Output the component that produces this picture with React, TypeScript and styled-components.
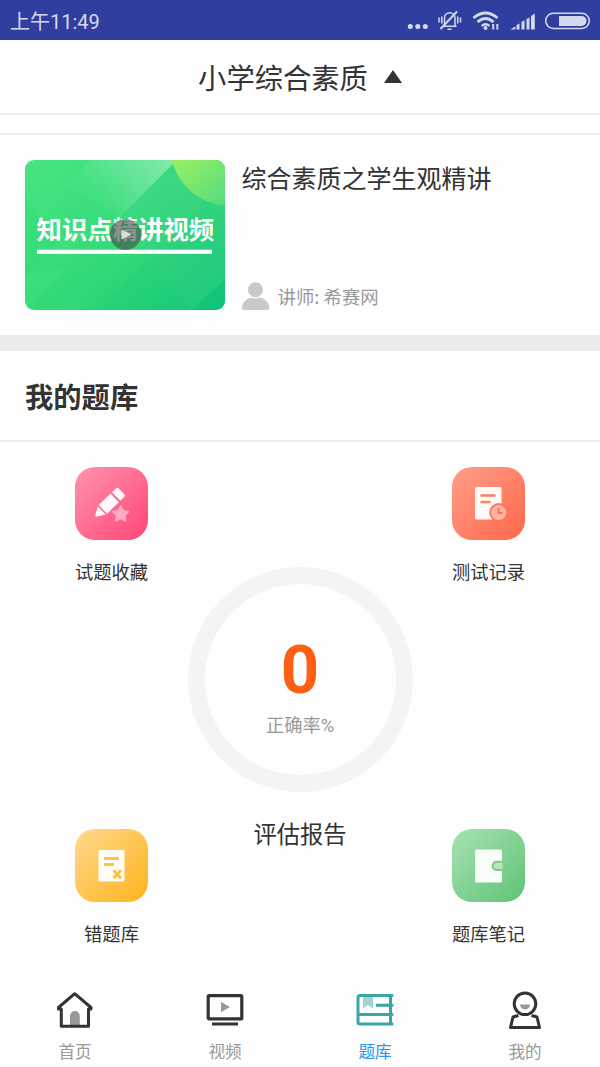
import React from 'react';
import styled, { createGlobalStyle } from 'styled-components';

const Global = createGlobalStyle`
  * { box-sizing: border-box; }
  body { margin: 0; background: #fefefe; font-family: "Noto Sans CJK SC", sans-serif; color: #333; }
  svg { display: block; flex: none; }
`;

const Screen = styled.div`
  width: 600px;
  height: 1067px;
  display: flex;
  flex-direction: column;
  overflow: hidden;
`;

const Latin = styled.span`
  font-family: Roboto, sans-serif;
  line-height: 1;
`;

const StatusBar = styled.div`
  height: 40px;
  flex: none;
  display: flex;
  justify-content: space-between;
  align-items: center;
  padding: 2px 0 0 10px;
  background: #303f9f;
  color: #d6d9ec;
  font-size: 20px;
  line-height: 38px;
`;

const Header = styled.header`
  height: 75px;
  flex: none;
  display: flex;
  align-items: center;
  justify-content: center;
  gap: 16px;
  border-bottom: 2px solid #ececec;
  font-size: 28.3px;
  line-height: 40px;
`;

const Spacer = styled.div`
  height: 20px;
  flex: none;
  border-bottom: 2px solid #ececec;
`;

const VideoCard = styled.section`
  height: 200px;
  flex: none;
  display: flex;
  gap: 16.500px;
  padding: 25px;
`;

const Cover = styled.div`
  position: relative;
  width: 200px;
  height: 150px;
  border-radius: 9px;
  overflow: hidden;
`;

const CoverArt = styled.svg`
  position: absolute;
  inset: 0;
`;

const CoverTitle = styled.div`
  position: absolute;
  left: 11.500px;
  top: 49px;
  width: 184px;
  font-size: 25.4px;
  line-height: 38px;
  font-weight: 700;
  color: #fff;
  white-space: nowrap;
`;

const PlayBadge = styled.svg`
  position: absolute;
  left: 84.500px;
  top: 59px;
`;

const VideoInfo = styled.div`
  display: flex;
  flex-direction: column;
  justify-content: space-between;
`;

const VideoTitle = styled.div`
  font-size: 25px;
  line-height: 34px;
`;

const Lecturer = styled.div`
  display: flex;
  align-items: flex-end;
  gap: 8px;
  font-size: 18.4px;
  line-height: 28px;
  color: #999;
`;

const SectionTitle = styled.h2`
  height: 107px;
  flex: none;
  margin: 0;
  padding: 0 25px;
  border-top: 16px solid #ececec;
  border-bottom: 2px solid #ececec;
  font-size: 28.3px;
  line-height: 89px;
  font-weight: 700;
`;

const Board = styled.section`
  height: 533px;
  flex: none;
  display: grid;
  grid-template-columns: 149px 228px 149px;
  justify-content: center;
  padding: 25px 0 27px;
`;

const ShortcutColumn = styled.div`
  display: flex;
  flex-direction: column;
  justify-content: space-between;
`;

const Shortcut = styled.div`
  display: flex;
  flex-direction: column;
  align-items: center;
  gap: 17px;
  height: 119px;
  font-size: 18.3px;
  line-height: 28px;
`;

const Report = styled.div`
  display: flex;
  flex-direction: column;
  align-items: center;
  padding-top: 100px;
`;

const Gauge = styled.div`
  width: 225px;
  height: 225px;
  display: flex;
  flex-direction: column;
  align-items: center;
  border: 17px solid #f4f4f4;
  border-radius: 50%;
`;

const Score = styled.div`
  margin-top: 46px;
  font-family: Roboto, sans-serif;
  font-size: 67px;
  line-height: 80px;
  font-weight: 700;
  color: #ff5f14;
`;

const ScoreUnit = styled.div`
  margin-top: 1px;
  font-size: 18.3px;
  line-height: 26px;
  color: #999;
`;

const ReportLabel = styled.div`
  margin-top: 23px;
  font-size: 23.3px;
  line-height: 36px;
`;

const TabBar = styled.nav`
  flex: 1;
  display: grid;
  grid-template-columns: repeat(4, 150px);
`;

const Tab = styled.div<{ $active?: boolean }>`
  display: flex;
  flex-direction: column;
  align-items: center;
  padding-top: 15px;
  gap: 9px;
  font-size: 16.6px;
  line-height: 24px;
  color: ${(p) => (p.$active ? '#2795f5' : '#999')};
`;

const StatusIcons = () => (
  <svg width="200" height="38" viewBox="0 1 200 38" fill="#d6d9ec">
    <circle cx="10.300" cy="25.500" r="2.500" />
    <circle cx="17.800" cy="25.500" r="2.500" />
    <circle cx="25.300" cy="25.500" r="2.500" />
    <g fill="none" stroke="#d6d9ec" strokeWidth="1.500">
      <path d="M43 25.300h13.500M44.500 25v-8c0-7 10.500-7 10.500 0v8M47.500 28.200h4M41.800 15.500v7M39 16.500v5M57.700 15.500v7M60.500 16.500v5" />
      <path d="M40.500 28L57 10.500" strokeWidth="2" />
      <g strokeWidth="2.800">
        <path d="M73.500 17q12-10 24 0" />
        <path d="M77.500 21q8-7 16 0" />
        <path d="M81.500 25q4-3.500 8 0" strokeWidth="2.300" />
      </g>
      <path d="M93.200 23v5.500M97.300 23v5.500" strokeWidth="2" />
      <rect x="145.700" y="12.200" width="43.600" height="15.200" rx="7.600" />
    </g>
    <circle cx="85.500" cy="27" r="2" />
    <path d="M110.300 28.500l5-3v3zM116.500 24l3-1.500v6h-3zM121.500 21l3-1.700v9.200h-3zM126.500 18l3-1.500v12h-3zM131 15l3.800-2.500v16H131z" />
    <path d="M159 15h22.500a5 5 0 0 1 0 10H159z" />
  </svg>
);

const CoverScene = () => (
  <CoverArt width="200" height="150" viewBox="0 0 200 150">
    <defs>
      <linearGradient id="cover" x1="0" y1="0" x2="1" y2="1">
        <stop offset="0" stopColor="#48e582" />
        <stop offset="0.600" stopColor="#30d877" />
        <stop offset="1" stopColor="#12c87a" />
      </linearGradient>
      <linearGradient id="beam" gradientUnits="userSpaceOnUse" x1="142" y1="0" x2="75" y2="45">
        <stop offset="0" stopColor="#fff" stopOpacity="0.360" />
        <stop offset="1" stopColor="#fff" stopOpacity="0.020" />
      </linearGradient>
      <linearGradient id="sun" x1="0" y1="0" x2="1" y2="1">
        <stop offset="0" stopColor="#9bf061" />
        <stop offset="1" stopColor="#54dc80" />
      </linearGradient>
    </defs>
    <rect width="200" height="150" fill="url(#cover)" />
    <path d="M0 34L45 106 0 115z" fill="#12c875" opacity="0.080" />
    <path d="M66 0L38 25 95 57 152 0z" fill="url(#beam)" />
    <path d="M152 0h48v120l-35 30L95 57z" fill="#4bcf94" opacity="0.220" />
    <path d="M0 115L62 53 45 106 0 150z" fill="#48ef80" opacity="0.150" />
    <path d="M70 150L180 40l20 20v60l-30 30z" fill="#14c774" opacity="0.100" />
    <path d="M200 119v31h-31z" fill="#0bc276" opacity="0.450" />
    <path d="M147 0C153 25 174 44 200 45V0z" fill="url(#sun)" />
    <rect x="12" y="89.700" width="175" height="4.100" fill="#fff" />
  </CoverArt>
);

type TileName = 'favorite' | 'record' | 'mistake' | 'note';

const tileColors: Record<TileName, [string, string]> = {
  favorite: ['#ff8fab', '#ff4a78'],
  record: ['#ff9c87', '#ff6a4c'],
  mistake: ['#ffd88a', '#ffb520'],
  note: ['#a5e0b0', '#62c578'],
};

const tileGlyphs: Record<TileName, React.ReactNode> = {
  favorite: (
    <>
      <g transform="translate(21 49) rotate(-44)" fill="#fff" opacity="0.950">
        <path d="M0.500-1.300L8-5.700v11.400L0.500 1.300C-1 .600-1-.600.500-1.300z" />
        <path d="M9.500-6H26v12H9.500z" />
        <path d="M28-6h5.500a2 2 0 0 1 2 2v8a2 2 0 0 1-2 2H28z" />
      </g>
      <path d="M45.700 39.200l2.300 4.700 5.200.800-3.700 3.700.8 5.200-4.600-2.400-4.700 2.400.9-5.200-3.800-3.700 5.200-.8z" fill="#ffabc2" stroke="#ffabc2" strokeWidth="2" strokeLinejoin="round" />
    </>
  ),
  record: (
    <>
      <rect x="23" y="20" width="26.500" height="32.500" rx="1.500" fill="#fff" opacity="0.950" />
      <path d="M28.500 28.500h15M28.500 35h10" stroke="#ff8064" strokeWidth="2.600" />
      <circle cx="46.700" cy="45.500" r="8.500" fill="#ffb5a5" stroke="#ff7658" strokeWidth="1.800" />
      <path d="M46.500 41v5h4" fill="none" stroke="#ff6e50" strokeWidth="1.800" />
    </>
  ),
  mistake: (
    <>
      <rect x="23.500" y="21" width="26" height="31.500" rx="1.500" fill="#fff" opacity="0.960" />
      <path d="M29 29.500h15M29 35.500h10" stroke="#ffc344" strokeWidth="2.800" />
      <path d="M38.500 41.300l7.500 8M46 41.300l-7.500 8" stroke="#ffbf38" strokeWidth="2.900" />
    </>
  ),
  note: (
    <>
      <rect x="23" y="20.500" width="27" height="33" rx="1.500" fill="#fff" opacity="0.950" />
      <path d="M50.500 32.700h-5.800a4.100 4.100 0 0 0 0 8.200h5.800" fill="#b7e5c2" stroke="#76cd89" strokeWidth="2" />
    </>
  ),
};

const Tile = ({ name }: { name: TileName }) => (
  <svg width="73" height="73" viewBox="0 0 73 73">
    <defs>
      <linearGradient id={name} x1="0" y1="0" x2="1" y2="1">
        <stop offset="0.050" stopColor={tileColors[name][0]} />
        <stop offset="0.950" stopColor={tileColors[name][1]} />
      </linearGradient>
    </defs>
    <rect width="73" height="73" rx="20" fill={`url(#${name})`} />
    {tileGlyphs[name]}
  </svg>
);

const ShortcutItem = ({ name, label }: { name: TileName; label: string }) => (
  <Shortcut>
    <Tile name={name} />
    {label}
  </Shortcut>
);

const tabs = [
  {
    label: '首页',
    icon: (
      <>
        <path d="M15 37V26.500a4.800 4.800 0 0 1 9.800 0V37z" fill="#999" transform="translate(0 -.5)" />
        <path d="M6.300 36.300V19H3.500v-1.500L19.700 3.700 36 17.500V19h-2.500v17.300z" fill="none" stroke="#333" strokeWidth="3" strokeLinejoin="round" />
      </>
    ),
  },
  {
    label: '视频',
    icon: (
      <>
        <rect x="3.200" y="5.700" width="33.600" height="23.200" rx="1" fill="none" stroke="#333" strokeWidth="3.200" />
        <path d="M16 11.700l9 5.300-9 5.300z" fill="#999" />
        <path d="M7 34h26" stroke="#333" strokeWidth="3" />
      </>
    ),
  },
  {
    label: '题库',
    active: true,
    icon: (
      <>
        <path d="M8 6h10v12.500l-5-3.500-5 3.500z" fill="#a4d5d5" />
        <path d="M38.300 5.500H5a2 2 0 0 0-2 2V32a2 2 0 0 0 2 2h33.300M21 15.300h17.300M4 24.500h34.300M35.500 5v29" fill="none" stroke="#3ba5a7" strokeWidth="3" />
      </>
    ),
  },
  {
    label: '我的',
    icon: (
      <>
        <circle cx="20" cy="13.800" r="10.800" fill="none" stroke="#333" strokeWidth="3" />
        <path d="M15 14.500h10a5 5 0 0 1-10 0z" fill="#999" />
        <path d="M13.500 25.500L8 27 5.500 37.500h29L32 27l-5.500-1.500" fill="none" stroke="#333" strokeWidth="3" strokeLinejoin="round" />
      </>
    ),
  },
];

export default function App() {
  return (
    <Screen>
      <Global />
      <StatusBar>
        <span>上午<Latin>11:49</Latin></span>
        <StatusIcons />
      </StatusBar>
      <Header>
        <span>小学综合素质</span>
        <svg width="18" height="14" viewBox="0 0 18 14"><path d="M9 0l9 13H0z" fill="#333" /></svg>
      </Header>
      <Spacer />
      <VideoCard>
        <Cover>
          <CoverScene />
          <CoverTitle>知识点精讲视频</CoverTitle>
          <PlayBadge width="31" height="31" viewBox="0 0 31 31">
            <circle cx="15.500" cy="15.500" r="15.500" fill="#4a4a4a" opacity="0.620" />
            <path d="M11.500 10.500l10 5-10 5z" fill="#eee" opacity="0.850" />
          </PlayBadge>
        </Cover>
        <VideoInfo>
          <VideoTitle>综合素质之学生观精讲</VideoTitle>
          <Lecturer>
            <svg width="28" height="28" viewBox="0 0 28 28" fill="#c9c9c9">
              <circle cx="13.500" cy="7.800" r="7.500" />
              <path d="M0 26c0-6 4.500-9.500 9.500-10.500q4 2 8 0C22.500 16.500 27.300 20 27.300 26q0 2-2 2H2q-2 0-2-2z" />
            </svg>
            讲师: 希赛网
          </Lecturer>
        </VideoInfo>
      </VideoCard>
      <SectionTitle>我的题库</SectionTitle>
      <Board>
        <ShortcutColumn>
          <ShortcutItem name="favorite" label="试题收藏" />
          <ShortcutItem name="mistake" label="错题库" />
        </ShortcutColumn>
        <Report>
          <Gauge>
            <Score>0</Score>
            <ScoreUnit>正确率<Latin>%</Latin></ScoreUnit>
          </Gauge>
          <ReportLabel>评估报告</ReportLabel>
        </Report>
        <ShortcutColumn>
          <ShortcutItem name="record" label="测试记录" />
          <ShortcutItem name="note" label="题库笔记" />
        </ShortcutColumn>
      </Board>
      <TabBar>
        {tabs.map((tab) => (
          <Tab key={tab.label} $active={tab.active}>
            <svg width="40" height="40" viewBox="0 0 40 40">{tab.icon}</svg>
            {tab.label}
          </Tab>
        ))}
      </TabBar>
    </Screen>
  );
}
